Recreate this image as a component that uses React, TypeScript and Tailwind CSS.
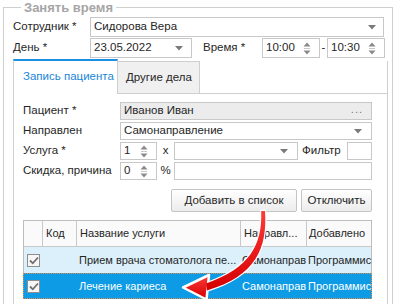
import React from 'react';

const DropArrow: React.FC = () => (
  <svg width="8" height="5" viewBox="0 0 8 5" className="shrink-0">
    <polygon points="0,0 8,0 4,4.5" fill="#7a7a7a" />
  </svg>
);

const Spin: React.FC = () => (
  <svg width="8" height="13" viewBox="0 0 8 13" className="shrink-0">
    <polygon points="4,0.5 7.5,4.5 0.5,4.5" fill="#8a8a8a" />
    <rect x="1" y="6" width="6" height="1" fill="#c8c8c8" />
    <polygon points="0.5,8.5 7.5,8.5 4,12.5" fill="#8a8a8a" />
  </svg>
);

const Check: React.FC = () => (
  <div className="w-[13px] h-[13px] border border-[#8e8e8e] bg-[#f6f6f6] flex items-center justify-center">
    <svg width="10" height="9" viewBox="0 0 10 9">
      <path d="M1 4.5 L3.8 7.3 L9 1.5" fill="none" stroke="#6f6f6f" strokeWidth="1.8" />
    </svg>
  </div>
);

// поле со спиннером (время, количество)
const SpinBox: React.FC<{ value: string; w: string; h: string }> = ({ value, w, h }) => (
  <div className={`${w} ${h} shrink-0 border border-[#c8c8c8] bg-white flex items-center pl-[3px] pr-[8px]`}>
    <span className="flex-1">{value}</span>
    <Spin />
  </div>
);

const Cell: React.FC<{ w: string; children?: React.ReactNode; cls?: string }> = ({ w, children, cls }) => (
  <div className={`${w} shrink-0 whitespace-nowrap ${cls ?? ''}`}>{children}</div>
);

const App: React.FC = () => {
  return (
    <div className="relative w-[395px] h-[304px] overflow-hidden bg-white font-['Liberation_Sans',Arial,sans-serif] text-[11.5px] text-[#262626]">
      <fieldset className="ml-[3px] w-[390px] h-[340px] border border-[#cfcfcf] pl-[9px]">
        <legend className="ml-[8px] px-[3px] text-[13px] leading-[15px] font-bold text-[#a6a6a6]">Занять время</legend>

        {/* сотрудник */}
        <div className="flex items-center mt-[2px] h-[20px]">
          <div className="w-[77px]">Сотрудник *</div>
          <div className="w-[294px] h-[20px] border border-[#c8c8c8] bg-white flex items-center pl-[3px] pr-[7px]">
            <span className="flex-1">Сидорова Вера</span>
            <DropArrow />
          </div>
        </div>

        {/* день / время */}
        <div className="flex items-center mt-[1px] h-[20px]">
          <div className="w-[77px]">День *</div>
          <div className="w-[102px] h-[20px] border border-[#c8c8c8] bg-white flex items-center pl-[3px] pr-[8px]">
            <span className="flex-1">23.05.2022</span>
            <DropArrow />
          </div>
          <div className="w-[59px] ml-[11px]">Время *</div>
          <SpinBox value="10:00" w="w-[58px]" h="h-[20px]" />
          <div className="w-[7px] text-center">-</div>
          <SpinBox value="10:30" w="w-[58px]" h="h-[20px]" />
        </div>

        {/* вкладки */}
        <div className="flex items-end mt-[1px] h-[35px] w-[375px]">
          <div className="w-[105px] h-[35px] whitespace-nowrap border-t-2 border-t-[#1c8fe3] border-x border-x-[#cfcfcf] bg-white flex items-center pl-[9px] pb-[2px] text-[#1a86d8]">
            Запись пациента
          </div>
          <div className="w-[82px] h-[33px] whitespace-nowrap border-t border-r border-b border-[#cfcfcf] bg-[#f0f0f0] flex items-center pl-[8px]">
            Другие дела
          </div>
          <div className="flex-1 h-[33px] border-b border-r border-[#cfcfcf]" />
        </div>

        <div className="w-[375px] h-[240px] border-x border-[#cfcfcf] pl-[9px] pt-[8px]">
          {/* пациент */}
          <div className="flex items-center h-[18px]">
            <div className="w-[97px]">Пациент *</div>
            <div className="w-[252px] h-[18px] border border-[#c8c8c8] bg-[#ececec] flex items-center pl-[3px] pr-[8px]">
              <span className="flex-1">Иванов Иван</span>
              <span className="text-[#777] tracking-[1px] text-[11px] leading-none -mt-[4px]">...</span>
            </div>
          </div>

          <div className="flex items-center h-[18px] mt-[2px]">
            <div className="w-[97px]">Направлен</div>
            <div className="w-[252px] h-[18px] border border-[#c8c8c8] bg-white flex items-center pl-[3px] pr-[9px]">
              <span className="flex-1">Самонаправление</span>
              <DropArrow />
            </div>
          </div>

          <div className="flex items-center h-[18px] mt-[2px]">
            <div className="w-[97px]">Услуга *</div>
            <SpinBox value="1" w="w-[37px]" h="h-[18px]" />
            <div className="w-[17px] text-center">x</div>
            <div className="w-[124px] h-[18px] border border-[#c8c8c8] bg-white flex items-center justify-end pr-[9px]">
              <DropArrow />
            </div>
            <div className="w-[49px] pl-[4px]">Фильтр</div>
            <div className="w-[25px] h-[18px] border border-[#c8c8c8] bg-white" />
          </div>

          <div className="flex items-center h-[18px] mt-[2px]">
            <div className="w-[97px] whitespace-nowrap">Скидка, причина</div>
            <SpinBox value="0" w="w-[37px]" h="h-[18px]" />
            <div className="w-[17px] text-center">%</div>
            <div className="w-[198px] h-[18px] border border-[#c8c8c8] bg-white" />
          </div>

          {/* кнопки */}
          <div className="flex justify-end gap-[4px] w-[349px] mt-[9px]">
            <button className="w-[126px] h-[23px] border border-[#c4c4c4] rounded-[2px] bg-gradient-to-b from-white to-[#ececec] text-[11.5px]">
              Добавить в список
            </button>
            <button className="w-[71px] h-[23px] border border-[#c4c4c4] rounded-[2px] bg-gradient-to-b from-white to-[#ececec] text-[11.5px]">
              Отключить
            </button>
          </div>

          {/* таблица услуг */}
          <div className="w-[349px] mt-[8px] border-l border-t border-r border-[#bdbdbd] text-[11px]">
            <div className="flex h-[26px] bg-[#fafafa] border-b border-[#c8c8c8]">
              <div className="w-[19px] shrink-0 border-r border-[#c8c8c8]" />
              <div className="w-[34px] shrink-0 border-r border-[#c8c8c8] flex items-center pl-[3px]">Код</div>
              <div className="w-[164px] shrink-0 border-r border-[#c8c8c8] flex items-center pl-[3px]">Название услуги</div>
              <div className="w-[66px] shrink-0 border-r border-[#c8c8c8] flex items-center pl-[3px]">Направл...</div>
              <div className="flex-1 flex items-center pl-[2px] whitespace-nowrap">Добавлено</div>
            </div>
            <div className="flex h-[26px] bg-[#dcf0fc] items-center">
              <div className="w-[19px] shrink-0 flex justify-center"><Check /></div>
              <Cell w="w-[34px]" />
              <Cell w="w-[164px]" cls="pl-[2px]">Прием врача стоматолога пе...</Cell>
              <Cell w="w-[66px]" cls="pl-[1px]">Самонаправ</Cell>
              <Cell w="w-[64px]" cls="pl-[1px]">Программис</Cell>
            </div>
            <div className="flex h-[26px] bg-[#0d9be6] items-center text-white border border-dotted border-[#f08a3c] -mx-px">
              <div className="w-[19px] shrink-0 flex justify-center"><Check /></div>
              <Cell w="w-[34px]" />
              <Cell w="w-[164px]" cls="pl-[2px]">Лечение кариеса</Cell>
              <Cell w="w-[66px]" cls="pl-[1px]">Самонаправ</Cell>
              <Cell w="w-[64px]" cls="pl-[1px]">Программис</Cell>
            </div>
          </div>
        </div>
      </fieldset>

      {/* красная стрелка поверх таблицы */}
      <svg className="absolute left-0 top-0 pointer-events-none" width="395" height="304" viewBox="0 0 395 304">
        <defs>
          <linearGradient id="arr" x1="0" y1="0" x2="0" y2="1">
            <stop offset="0" stopColor="#ff3a3a" />
            <stop offset="1" stopColor="#d40000" />
          </linearGradient>
        </defs>
        <g stroke="#ffffff" strokeWidth="2.5" strokeLinejoin="round" fill="url(#arr)">
          <path d="M261.2 211 C262.5 245 250 268 206 283.5 L207 290.5 C256 276 267.5 248 265 211 Z" />
          <path d="M183 287.5 L209 275 L206.5 299.5 Z" />
        </g>
        <g fill="url(#arr)">
          <path d="M261.2 211 C262.5 245 250 268 206 283.5 L207 290.5 C256 276 267.5 248 265 211 Z" />
        </g>
      </svg>
    </div>
  );
};

export default App;
